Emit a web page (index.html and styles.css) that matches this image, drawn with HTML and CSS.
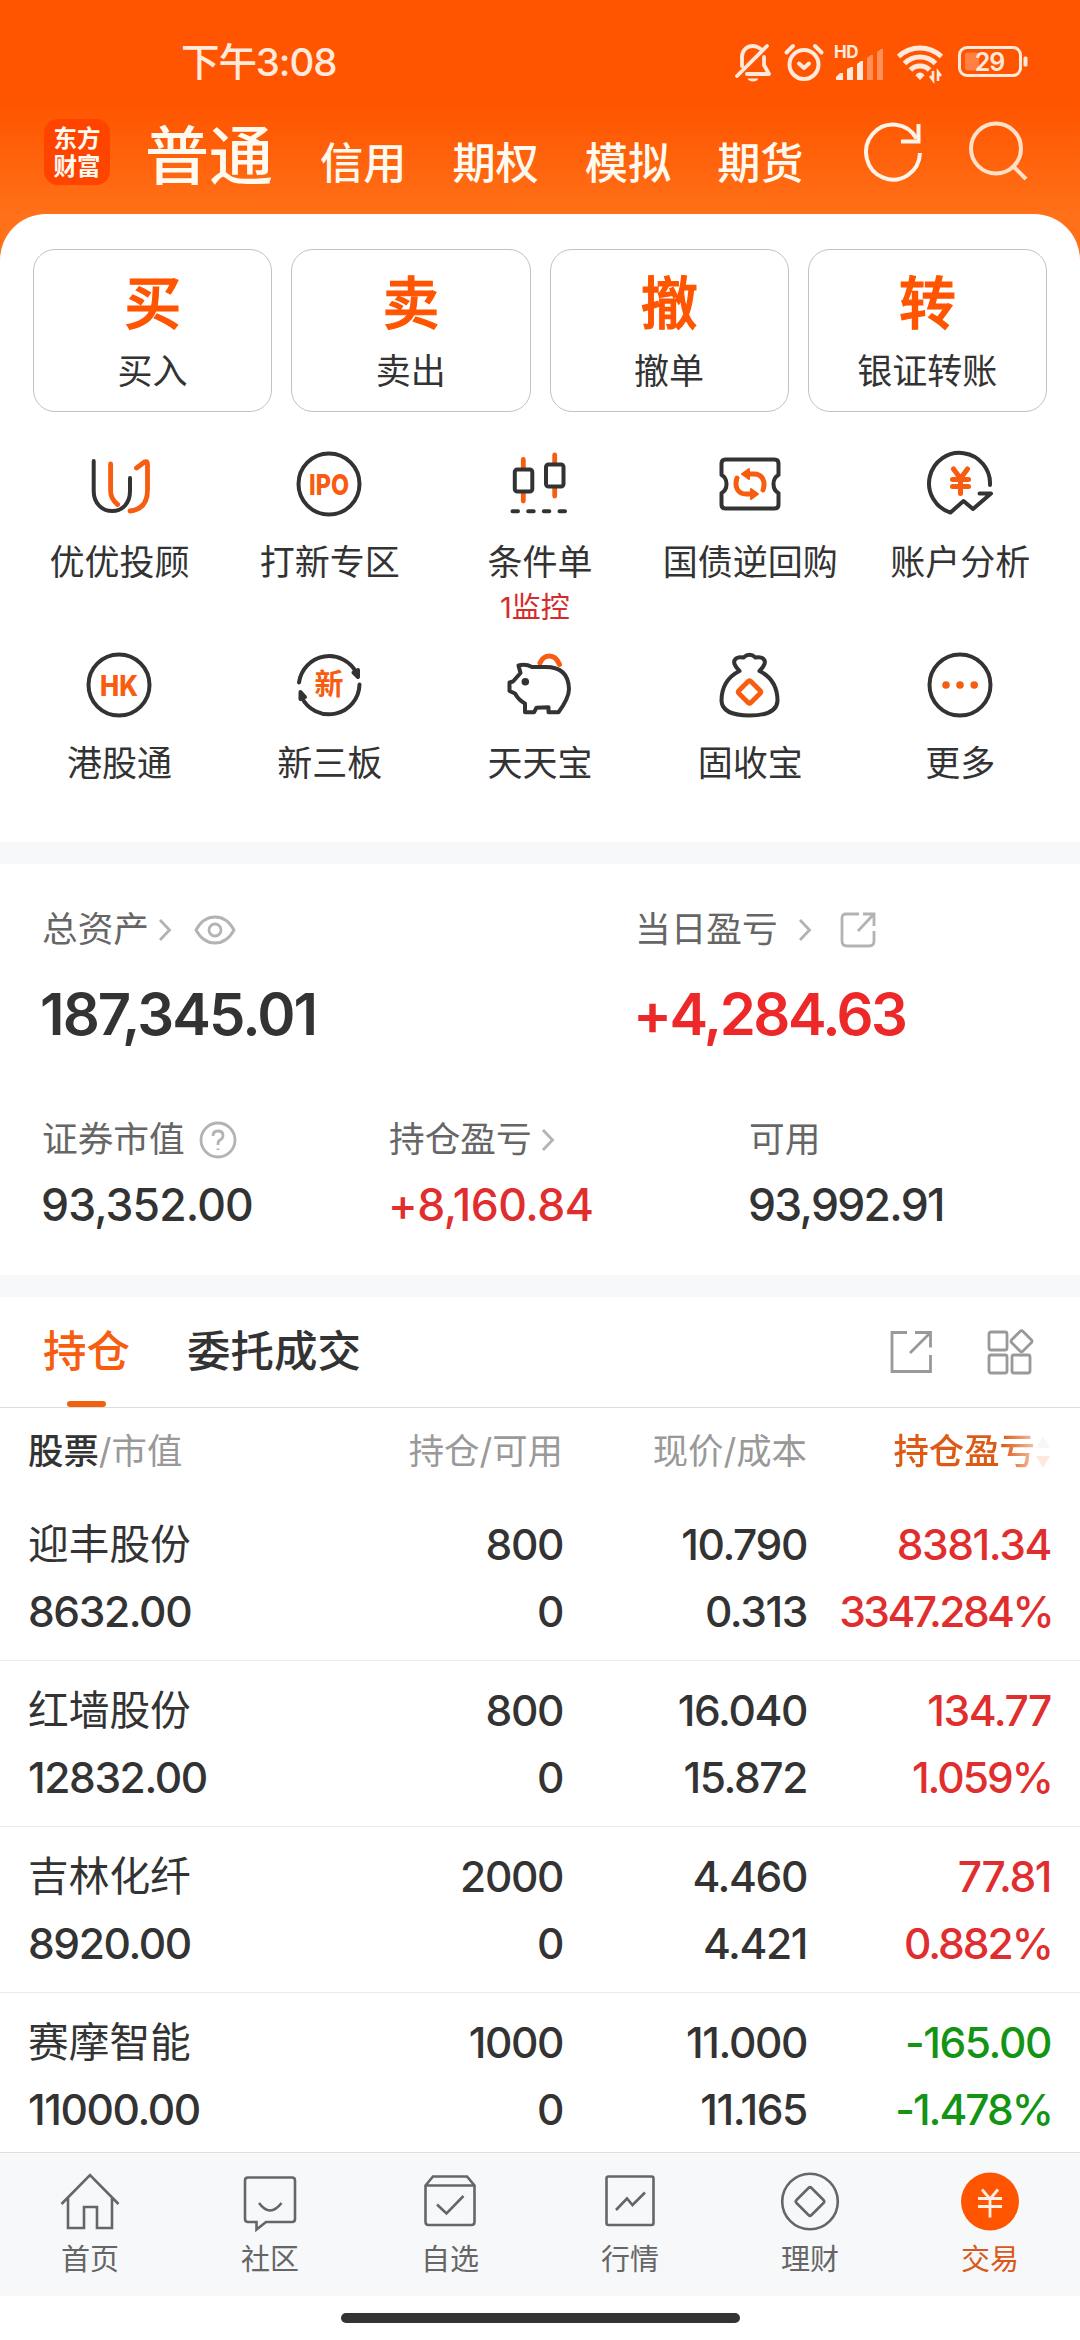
FILE: index.html
```html
<!DOCTYPE html>
<html lang="zh-CN">
<head>
    <meta charset="UTF-8">
    <meta name="viewport" content="width=device-width, initial-scale=1.0">
    <title>交易</title>
    <link rel="stylesheet" href="styles.css">
</head>
<body>
    <header class="header">
        <div class="status-bar">
            <span class="time">下午3:08</span>
            <div class="status-icons">
                <svg class="bell" width="36" height="40" viewBox="0 0 36 40" fill="none" stroke="#ffe9dc" stroke-width="3.8" stroke-linecap="round" stroke-linejoin="round">
                    <path d="M7 24V15C7 8 12 4 18 4c3 0 5 1 7 2.500M29 15v8l5 9H12"/>
                    <path d="M2 34L32 4"/>
                    <path d="M12.500 36.500h11q-1.500 3-5.500 3t-5.500-3z" fill="#ffe9dc" stroke="none"/>
                </svg>
                <svg class="alarm" width="40" height="40" viewBox="0 0 40 40" fill="none" stroke="#ffe9dc" stroke-width="4" stroke-linecap="round" stroke-linejoin="round">
                    <circle cx="20" cy="22.500" r="14.500"/>
                    <path d="M2.500 10.500L9 4M31 4l6.500 6.500"/>
                    <path d="M15 21.500l5 4.500 5-4.500"/>
                </svg>
                <svg class="signal" width="52" height="40" viewBox="0 0 52 40" fill="#ffe9dc">
                    <text class="hd" x="0" y="16">HD</text>
                    <path d="M2 38v-3l4-4h3v7zM13 38V27l4-2h2v13zM23 38V22l4-3h2v19z"/>
                    <path d="M33 38V16l4-3h2v25zM43 38V10l4-3h2v31z" opacity=".4"/>
                </svg>
                <svg class="wifi" width="46" height="40" viewBox="0 0 46 40" fill="none" stroke="#ffe9dc" stroke-width="5">
                    <path d="M1.500 14.500Q11 6 23 6t21.500 8.500"/>
                    <path d="M7.500 21.500Q14 15 23 15t15.500 6.500"/>
                    <path d="M13.500 28Q17 24 23 24t9.500 4"/>
                    <path d="M23 38l-4.500-4.500q1.500-3 4.500-3t4.500 3z" fill="#ffe9dc" stroke="none"/>
                    <path d="M36 29v9l-3-4M41 39V30l3 4" stroke-width="2.600"/>
                </svg>
                <svg class="battery" width="70" height="32" viewBox="0 0 70 32">
                    <rect x="1.500" y="1.500" width="61" height="28" rx="7.500" fill="none" stroke="#ffe9dc" stroke-width="3"/>
                    <rect x="7" y="6.500" width="14" height="18" rx="3" fill="#ff8040"/>
                    <rect x="65.500" y="10.500" width="4" height="10" rx="1.500" fill="#ffe9dc"/>
                    <text class="battery-level" x="31.500" y="24.500">29</text>
                </svg>
            </div>
        </div>
        <div class="top-bar">
            <div class="logo">东方<br>财富</div>
            <nav class="account-tabs">
                <a class="current">普通</a>
                <a>信用</a>
                <a>期权</a>
                <a>模拟</a>
                <a>期货</a>
            </nav>
            <svg class="refresh" width="60" height="62" viewBox="1 0 60 62" fill="none" stroke="#fff4ea" stroke-width="4">
                <path d="M56 32A27 27.500 0 1 1 52.500 17.500"/>
                <path d="M54.500 3v17.500H37"/>
            </svg>
            <svg class="search" width="60" height="62" viewBox="0 0 60 62" fill="none" stroke="#ffe0c8" stroke-width="4">
                <circle cx="27" cy="27.500" r="25"/>
                <path d="M44.500 45.500L57 58"/>
            </svg>
        </div>
    </header>

    <main class="main">
        <section class="panel">
            <div class="cards">
                <a class="card"><b>买</b><span>买入</span></a>
                <a class="card"><b>卖</b><span>卖出</span></a>
                <a class="card"><b>撤</b><span>撤单</span></a>
                <a class="card"><b>转</b><span>银证转账</span></a>
            </div>
            <div class="menu">
                <a class="menu-item">
                    <svg class="icon" viewBox="0 0 70 70">
                        <path d="M9.700 12v30c0 12 8 20 18.500 20S46 54 46 42V29"/>
                        <path class="orange" d="M26.600 15v27q0 8 7 13.500M52.500 19l8-6q3-1.500 3 2v26q0 19-17.500 21"/>
                    </svg>
                    <span>优优投顾</span>
                </a>
                <a class="menu-item">
                    <svg class="icon" viewBox="0 0 70 70">
                        <circle cx="35" cy="35" r="30.500"/>
                        <text class="icon-text latin" x="35" y="45.500" textLength="40" lengthAdjust="spacingAndGlyphs">IPO</text>
                    </svg>
                    <span>打新专区</span>
                </a>
                <a class="menu-item">
                    <svg class="icon" viewBox="0 0 70 70">
                        <path class="orange" d="M19.300 10.500v9M19.300 44v8M50.700 6v8M50.700 39v8"/>
                        <rect x="10.800" y="20.500" width="17.500" height="22" rx="2.500"/>
                        <rect x="42" y="15.500" width="17.500" height="22" rx="2.500"/>
                        <path d="M8.500 62.200h5.500M24.200 62.200h5.500M39.800 62.200h5.500M55.500 62.200h5.500"/>
                    </svg>
                    <span>条件单</span>
                    <em class="notice">1监控</em>
                </a>
                <a class="menu-item">
                    <svg class="icon" viewBox="0 0 70 70">
                        <path d="M10.500 10.500h49q4 0 4 4V26q-5 2.500-5 9t5 9v11.500q0 4-4 4h-49q-4 0-4-4V44q5-2.500 5-9t-5-9V14.500q0-4 4-4z"/>
                        <path class="orange thick" d="M48 41c3-9-1-16-9-16h-5M22 29c-3 9 1 16 9 16h5"/>
                        <path class="orange solid" d="M27 25l7-5v10zM43 45l-7-5v10z"/>
                    </svg>
                    <span>国债逆回购</span>
                </a>
                <a class="menu-item">
                    <svg class="icon" viewBox="0 0 70 70">
                        <path d="M65 36A30.500 30.500 0 1 0 25.500 63.500l13-11.500 9.500 8L66 44.500H54.500"/>
                        <path class="orange thick" d="M28.500 20l7 9.500 7-9.500M35.500 29.500V44.500M27.500 30.500h16M27.500 37.500h16"/>
                    </svg>
                    <span>账户分析</span>
                </a>
                <a class="menu-item">
                    <svg class="icon" viewBox="0 0 70 70">
                        <circle cx="35" cy="35" r="30.500"/>
                        <text class="icon-text latin" x="35" y="45.500" textLength="38" lengthAdjust="spacingAndGlyphs">HK</text>
                    </svg>
                    <span>港股通</span>
                </a>
                <a class="menu-item">
                    <svg class="icon" viewBox="0 0 70 70">
                        <path d="M5 32.500A30.500 30.500 0 0 1 62.500 23M65.500 34.500A30.500 30.500 0 0 1 7.500 47"/>
                        <path class="dark-solid" d="M59.500 22.500l4.500 4.500V20zM6.500 49v-7l4.500 5z"/>
                        <text class="icon-text" x="35" y="45.200">新</text>
                    </svg>
                    <span>新三板</span>
                </a>
                <a class="menu-item">
                    <svg class="icon" viewBox="0 0 70 70">
                        <path class="orange thick" d="M36 13q3-7 9.500-7t10 8.500"/>
                        <path d="M14.500 15.500q7-2 13.500 1.500h13.500q23 0 23.500 22 0 9-10.500 23.300H44.500v-5l-12 .500-2.500 4.500h-9V53.500q-6-3-10-10L5.500 41v-8.500l3.500-1 7.500-8.500z"/>
                        <circle class="dark-solid" cx="21.300" cy="31.700" r="1.800"/>
                    </svg>
                    <span>天天宝</span>
                </a>
                <a class="menu-item">
                    <svg class="icon" viewBox="0 0 70 70">
                        <path d="M24.500 21q-8-8-4-12 2-2.500 8-1.500 6-5.500 12 0 6-1 8 1.500 4 4-4 12 18 9 18 30-1 14.500-28 14.500T6.500 51q0-21 18-30z"/>
                        <path class="orange" d="M33 31.500q1.500-1.500 3 0l9 9q1.500 1.500 0 3l-9 9q-1.500 1.500-3 0l-9-9q-1.500-1.500 0-3z"/>
                    </svg>
                    <span>固收宝</span>
                </a>
                <a class="menu-item">
                    <svg class="icon" viewBox="0 0 70 70">
                        <circle cx="35" cy="35" r="30.500"/>
                        <path class="orange dots" d="M21 35h0M35 35h0M49.200 35h0"/>
                    </svg>
                    <span>更多</span>
                </a>
            </div>
        </section>

        <section class="assets">
            <div class="totals">
                <div>
                    <div class="label"><span>总资产</span>
                        <svg class="chevron" width="14" height="24" viewBox="0 0 14 24"><path d="M2 2l9.500 10L2 22"/></svg>
                        <svg class="eye" width="42" height="32" viewBox="0 0 42 32">
                            <path d="M2 16Q9 3 21 3t19 13q-7 13-19 13T2 16z"/>
                            <circle cx="21" cy="16" r="6"/>
                        </svg>
                    </div>
                    <div class="total">187,345.01</div>
                </div>
                <div>
                    <div class="label"><span>当日盈亏</span>
                        <svg class="chevron wide" width="14" height="24" viewBox="0 0 14 24"><path d="M2 2l9.500 10L2 22"/></svg>
                        <svg class="share-small" width="38" height="38" viewBox="0 0 38 38">
                            <path d="M20 3H7Q3 3 3 7v23q0 5 5 5h22q5 0 5-5V20M24 3h11v12M34 4L19 20"/>
                        </svg>
                    </div>
                    <div class="total up">+4,284.63</div>
                </div>
            </div>
            <div class="details">
                <div>
                    <div class="label"><span>证券市值</span>
                        <svg class="help" width="38" height="38" viewBox="0 0 38 38">
                            <circle cx="19" cy="19" r="17"/>
                            <path d="M14 15q0-5 5-5t5 4.500q0 3-3 4.500-2 1-2 4v1M19 27.500v1.500"/>
                        </svg>
                    </div>
                    <div class="value">93,352.00</div>
                </div>
                <div>
                    <div class="label"><span>持仓盈亏</span>
                        <svg class="chevron" width="14" height="24" viewBox="0 0 14 24"><path d="M2 2l9.500 10L2 22"/></svg>
                    </div>
                    <div class="value up">+8,160.84</div>
                </div>
                <div>
                    <div class="label"><span>可用</span></div>
                    <div class="value tight">93,992.91</div>
                </div>
            </div>
        </section>

        <section class="holdings">
            <div class="tabs">
                <a class="tab active">持仓</a>
                <a class="tab">委托成交</a>
                <svg class="tool" width="46" height="46" viewBox="0 0 46 46">
                    <path d="M19 3.500H4V42.500H42.500V26M27 3.500h15.500v15M42 4L22 24"/>
                </svg>
                <svg class="tool" width="50" height="48" viewBox="0 0 50 48">
                    <rect x="3" y="4" width="18" height="18" rx="2"/>
                    <rect x="3" y="27" width="18" height="18" rx="2"/>
                    <rect x="26" y="27" width="18" height="18" rx="2"/>
                    <path d="M34 3.500q1.500-1.500 3 0l8.500 8.500q1 1.500 0 2.500L37 23q-1.500 1.500-3 0l-8.500-8.500q-1-1 0-2.500z"/>
                </svg>
            </div>
            <div class="row row-head">
                <span><b>股票</b>/市值</span>
                <span>持仓/可用</span>
                <span>现价/成本</span>
                <span class="sorted">持仓盈亏<svg width="16" height="34" viewBox="0 0 16 34"><path d="M8 1l7 12H1z" fill="#f7f7f8"/><path d="M8 33l7-12H1z" fill="#ffe9df"/></svg></span>
            </div>
            <div class="row">
                <div><p class="name">迎丰股份</p><p>8632.00</p></div>
                <div><p>800</p><p>0</p></div>
                <div><p>10.790</p><p>0.313</p></div>
                <div class="up"><p>8381.34</p><p class="percent long">3347.284%</p></div>
            </div>
            <div class="row">
                <div><p class="name">红墙股份</p><p>12832.00</p></div>
                <div><p>800</p><p>0</p></div>
                <div><p>16.040</p><p>15.872</p></div>
                <div class="up"><p>134.77</p><p class="percent">1.059%</p></div>
            </div>
            <div class="row">
                <div><p class="name">吉林化纤</p><p>8920.00</p></div>
                <div><p>2000</p><p>0</p></div>
                <div><p>4.460</p><p>4.421</p></div>
                <div class="up"><p>77.81</p><p class="percent">0.882%</p></div>
            </div>
            <div class="row">
                <div><p class="name">赛摩智能</p><p>11000.00</p></div>
                <div><p>1000</p><p>0</p></div>
                <div><p>11.000</p><p>11.165</p></div>
                <div class="down"><p>-165.00</p><p class="percent">-1.478%</p></div>
            </div>
        </section>
    </main>

    <nav class="bottom-nav">
        <a>
            <svg viewBox="0 0 66 66">
                <path d="M4.500 36L33 7l28.500 29M11 30v30h16V39h13v21h15V30"/>
            </svg>
            <span>首页</span>
        </a>
        <a>
            <svg viewBox="0 0 66 66">
                <path d="M11 9.500h44q3 0 3 3V51q0 3-3 3H29l-9.500 7.500V54H11q-3 0-3-3V12.500q0-3 3-3zM22 35q11 15 22.500 0"/>
            </svg>
            <span>社区</span>
        </a>
        <a>
            <svg viewBox="0 0 66 66">
                <path d="M8.500 17.500l7.500-9h34l7.500 9V54q0 3-3 3h-43q-3 0-3-3zM9 17.500h48M20 36.500l9.500 9L46.500 28"/>
            </svg>
            <span>自选</span>
        </a>
        <a>
            <svg viewBox="0 0 66 66">
                <rect x="9.500" y="8.500" width="47" height="48.500" rx="2"/>
                <path d="M19 42l11-11.500 5.500 6.500L48 24.500"/>
            </svg>
            <span>行情</span>
        </a>
        <a>
            <svg viewBox="0 0 66 66">
                <circle cx="33" cy="33.500" r="27.800"/>
                <path d="M31.500 20q1.500-1.500 3 0L46.500 32q1.500 1.500 0 3L34.500 47q-1.500 1.500-3 0L19.500 35q-1.500-1.500 0-3z"/>
            </svg>
            <span>理财</span>
        </a>
        <a class="active">
            <svg viewBox="0 0 66 66">
                <circle class="disc" cx="33" cy="33.500" r="29"/>
                <path d="M25 21.500l8 9.500 8-9.500M33 31v18.500M21 30.500h24M21 38.500h24"/>
            </svg>
            <span>交易</span>
        </a>
    </nav>
    <div class="home-bar"><i></i></div>
</body>
</html>
```

FILE: styles.css
```css
* {
    box-sizing: border-box;
}
body {
    display: flex;
    flex-direction: column;
    width: 1080px;
    height: 2340px;
    margin: 0;
    overflow: hidden;
    font-family: Inter, "Noto Sans CJK SC", sans-serif;
    color: #333;
    background: #fff linear-gradient(#ff5500 0, #ff5500 105px, #ff7018 214px, #ff7018 280px, #fff 280px);
}
p {
    margin: 0;
}
svg {
    display: block;
    flex: none;
    overflow: visible;
}

/* header */
.header {
    flex: none;
    height: 214px;
    color: #fffaf0;
}
.status-bar {
    display: flex;
    align-items: center;
    justify-content: space-between;
    height: 104px;
    padding: 20px 52px 0 181px;
}
.time {
    font-size: 38.5px;
    line-height: 48px;
    font-weight: 500;
    letter-spacing: -1.1px;
    color: #ffe9dc;
}
.status-icons {
    display: flex;
    align-items: center;
}
.alarm {
    margin-left: 13px;
}
.signal {
    margin-left: 10px;
}
.wifi {
    margin-left: 11px;
}
.battery {
    margin-left: 15px;
}
.hd {
    font-size: 17px;
    font-weight: 700;
    letter-spacing: -0.5px;
}
.battery-level {
    font-size: 25px;
    font-weight: 600;
    text-anchor: middle;
    letter-spacing: -1px;
    fill: #ffe9dc;
}
.top-bar {
    display: flex;
    height: 110px;
    padding: 15px 51px 0 44px;
}
.logo {
    flex: none;
    width: 66px;
    height: 66px;
    padding-top: 4px;
    border-radius: 14px;
    background: #ff4400;
    font-family: "Noto Sans CJK SC", sans-serif;
    font-size: 23.5px;
    line-height: 28px;
    font-weight: 700;
    text-align: center;
}
.account-tabs {
    display: flex;
    align-items: baseline;
    flex: 1;
    height: 76px;
    margin: -1px 0 0 35px;
    font-size: 43.2px;
    line-height: 76px;
    font-weight: 500;
}
.account-tabs a {
    margin-right: 46px;
}
.account-tabs .current {
    margin-right: 47px;
    font-size: 64px;
}
.refresh {
    margin-top: 2px;
}
.search {
    margin: 2px 0 0 44px;
}

/* white content area */
.main {
    flex: none;
    height: 1938px;
    overflow: hidden;
    border-radius: 46px 46px 0 0;
    background: #fff;
}
.panel {
    height: 628px;
    padding: 35px 33px 0;
}
.cards {
    display: grid;
    grid-template-columns: repeat(4, 1fr);
    gap: 19px;
}
.card {
    display: flex;
    flex-direction: column;
    align-items: center;
    height: 163px;
    padding-top: 18px;
    border: 1px solid #c2c2c2;
    border-radius: 22px;
}
.card b {
    font-size: 57px;
    line-height: 72px;
    font-weight: 500;
    color: #ff5500;
    -webkit-text-stroke: 1.2px #ff5500;
}
.card span {
    font-size: 35px;
    line-height: 62px;
}
.menu {
    display: grid;
    grid-template-columns: repeat(5, 210.2px);
    grid-auto-rows: 201px;
    margin: 37px -19px 0;
}
.menu-item {
    display: flex;
    flex-direction: column;
    align-items: center;
    font-size: 35px;
    line-height: 50px;
    white-space: nowrap;
}
.menu-item span {
    margin: 18px 0 0 1px;
}
.notice {
    margin: -4px 0 0 -9px;
    font-size: 29px;
    font-style: normal;
    color: #d42c2c;
}
.icon {
    width: 70px;
    height: 70px;
    fill: none;
    stroke: #333;
    stroke-width: 4;
    stroke-linecap: round;
    stroke-linejoin: round;
}
.icon .orange {
    stroke: #f75c10;
    stroke-width: 4.8;
}
.icon .thick {
    stroke-width: 5;
}
.icon .dots {
    stroke-width: 7.5;
}
.icon .solid {
    fill: #f75c10;
    stroke-width: 2;
}
.icon .dark-solid {
    fill: #333;
}
.icon-text {
    font-size: 29px;
    font-weight: 700;
    text-anchor: middle;
    fill: #f75c10;
    stroke: none;
}
.icon-text.latin {
    font-weight: 800;
}

/* asset summary */
.assets {
    height: 455px;
    padding: 43px 42px 0;
    border-top: 22px solid #f7f8fa;
    border-bottom: 22px solid #f7f8fa;
}
.label {
    display: flex;
    align-items: center;
    height: 44px;
    font-size: 35.7px;
    color: #666;
    white-space: nowrap;
}
.label span {
    line-height: 44px;
}
.label svg {
    margin-top: 1px;
    fill: none;
    stroke: #b3b3b3;
    stroke-width: 2.8;
}
.chevron {
    margin-left: 9px;
}
.chevron.wide {
    margin-left: 20px;
}
.eye {
    margin-left: 22px;
}
.share-small {
    margin-left: 27px;
}
.help {
    margin-left: 14px;
}
.totals {
    display: grid;
    grid-template-columns: 593px 1fr;
}
.total {
    margin: 25px 0 0 -2px;
    font-size: 58px;
    line-height: 76px;
    font-weight: 600;
    letter-spacing: -1.9px;
}
.details {
    display: grid;
    grid-template-columns: 347px 360px 1fr;
    margin-top: 65px;
}
.value {
    margin: 13px 0 0 -1px;
    font-size: 44.5px;
    line-height: 62px;
    font-weight: 500;
    letter-spacing: -0.9px;
}
.value.tight {
    letter-spacing: -1.7px;
}
.up {
    color: #e02e2e;
}
.total.up {
    letter-spacing: -2.5px;
    color: #ec2828;
}
.value.up {
    letter-spacing: -0.5px;
}
.down {
    color: #149414;
}

/* holdings */
.tabs {
    display: flex;
    align-items: center;
    height: 111px;
    padding: 0 44px 0 43px;
    border-bottom: 1px solid #ddd;
}
.tab {
    height: 110px;
    margin-right: 57px;
    font-size: 43.5px;
    line-height: 108px;
    font-weight: 500;
}
.tab.active {
    display: flex;
    flex-direction: column;
    align-items: center;
    color: #f75c10;
}
.tab.active::after {
    content: "";
    width: 39px;
    height: 6px;
    margin-top: -4px;
    border-radius: 3px;
    background: #f0600f;
}
.tool {
    margin: 0 52px 0 auto;
    fill: none;
    stroke: #999;
    stroke-width: 2.8;
}
.tool + .tool {
    margin: 0;
}
.row {
    display: grid;
    grid-template-columns: 1fr 244px 244px 244px;
    height: 166px;
    padding: 16px 29px 0 28px;
    border-bottom: 1px solid #eaeaea;
    font-size: 42.5px;
    line-height: 67px;
    font-weight: 500;
    letter-spacing: -1.4px;
    text-align: right;
}
.row > :first-child {
    text-align: left;
}
.row .name {
    font-size: 40.7px;
    font-weight: 400;
    letter-spacing: 0;
}
.row .percent {
    margin-right: -1px;
    letter-spacing: -2px;
}
.row .long {
    letter-spacing: -2.6px;
}
.row-head {
    height: 87px;
    padding-top: 10px;
    border: 0;
    font-size: 35.4px;
    font-weight: 400;
    letter-spacing: 0;
    color: #999;
}
.row-head b {
    font-weight: 500;
    color: #333;
}
.sorted {
    display: flex;
    align-items: center;
    justify-content: flex-end;
    height: 67px;
    font-weight: 500;
    color: transparent;
    background: linear-gradient(90deg, #dd5a14 195px, #f8cdb8 232px);
    -webkit-background-clip: text;
    background-clip: text;
}

/* bottom navigation */
.bottom-nav {
    display: grid;
    flex: none;
    grid-template-columns: repeat(6, 1fr);
    height: 144px;
    border-top: 1px solid #ddd;
    background: #f7f8fa;
}
.bottom-nav a {
    display: flex;
    flex-direction: column;
    align-items: center;
    padding-top: 15px;
    font-size: 29px;
    line-height: 46px;
    color: #666;
}
.bottom-nav svg {
    width: 66px;
    height: 66px;
    margin-bottom: 3px;
    fill: none;
    stroke: #666;
    stroke-width: 2.6;
}
.bottom-nav .active {
    color: #d9581a;
}
.bottom-nav .active svg {
    stroke: #fff0e6;
    stroke-width: 2.8;
}
.bottom-nav .disc {
    fill: #ff5500;
    stroke: none;
}
.home-bar {
    display: flex;
    justify-content: center;
    flex: 1;
    padding-top: 17px;
    background: #fff;
}
.home-bar i {
    width: 399px;
    height: 10px;
    border-radius: 5px;
    background: #333;
}
```
